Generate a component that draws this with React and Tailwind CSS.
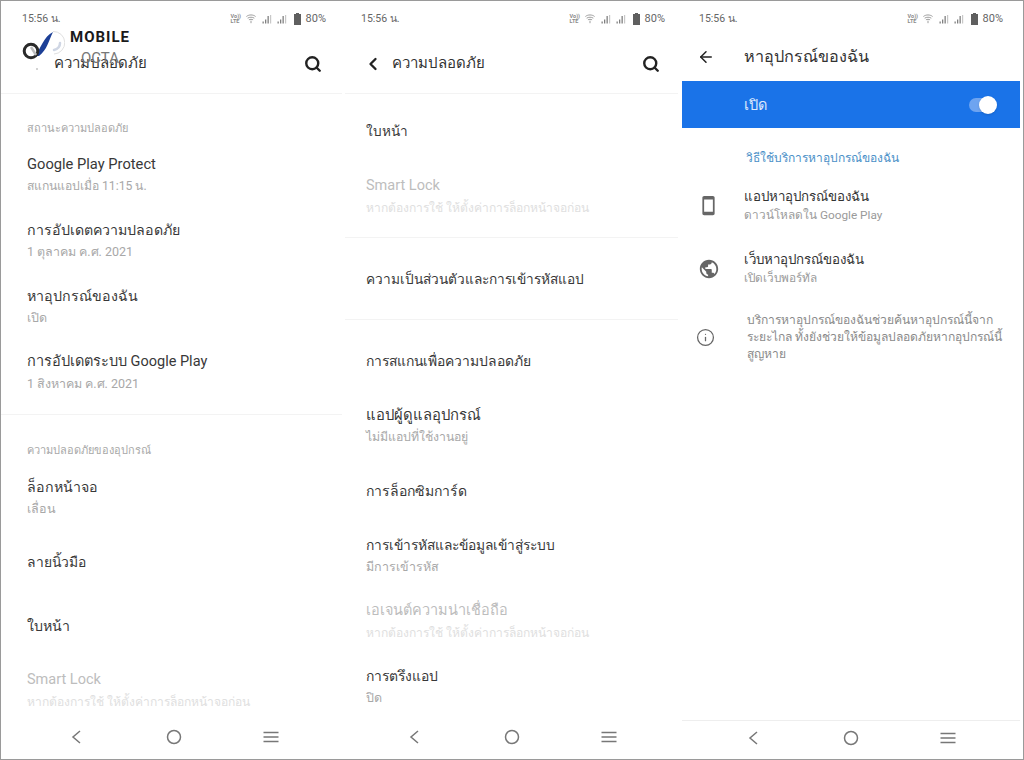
import React from "react";
import { Search, ChevronLeft, ArrowLeft, Info } from "lucide-react";

function StatusBar({ pl, pr }) {
  return (
    <div className={`h-[36px] shrink-0 flex items-center justify-between ${pl} ${pr} text-[10.5px] text-[#666666]`}>
      <span>15:56 น.</span>
      <div className="flex items-center">
        <div className="w-[12px] flex flex-col text-[5.5px] leading-[5px] font-bold text-[#8a8a8a]">
          <span>Vo))</span>
          <span>LTE</span>
        </div>
        <svg className="ml-[3px]" width="10" height="10" viewBox="0 0 12 11" fill="none" stroke="#8a8a8a" strokeWidth="1">
          <path d="M0.5 2.5C3.5 0 8.5 0 11.5 2.5" />
          <path d="M2 4.5C4.5 3 7.5 3 10 4.5" />
          <path d="M3.5 6.5C5 5.7 7 5.7 8.5 6.5" />
          <path d="M6 7.5v3" />
        </svg>
        <Signal className="ml-[6px]" />
        <Signal className="ml-[5px]" />
        <svg className="ml-[7px]" width="7" height="12" viewBox="0 0 7 12" fill="#5f5f5f">
          <path d="M2 0h3v1h2v11H0V1h2z" />
        </svg>
        <span className="text-[11px] ml-[5px] mt-[1px]">80%</span>
      </div>
    </div>
  );
}

function Signal({ className = "" }) {
  return (
    <svg className={className} width="10" height="9" viewBox="0 0 10 9" fill="#808080">
      <rect x="0.5" y="6.5" width="1.3" height="2" />
      <rect x="3" y="4.5" width="1.3" height="4" />
      <rect x="5.5" y="1" width="1.3" height="7.5" />
      <rect x="8" y="0" width="1.2" height="8.5" fill="#c8c8c8" />
    </svg>
  );
}

function NavBar({ pl, className = "" }) {
  return (
    <div className={`h-[34px] shrink-0 flex items-center ${pl} ${className}`}>
      <svg width="12" height="16" viewBox="0 0 12 16" fill="none" stroke="#777777" strokeWidth="1.5">
        <path d="M10 2L3 8l7 6" />
      </svg>
      <svg className="ml-[84px]" width="16" height="16" viewBox="0 0 16 16" fill="none" stroke="#777777" strokeWidth="1.5">
        <circle cx="8" cy="8" r="6.5" />
      </svg>
      <svg className="ml-[81px]" width="16" height="12" viewBox="0 0 16 12" fill="none" stroke="#777777" strokeWidth="1.4">
        <path d="M0.5 1.5h15M0.5 6h15M0.5 10.5h15" />
      </svg>
    </div>
  );
}

function Item({ title, sub, h = 66, disabled = false, pl = "pl-[26px]", size = "text-[14.2px]", subSize = "text-[12.5px]" }) {
  return (
    <div className={`shrink-0 flex flex-col justify-center ${pl}`} style={{ height: h }}>
      <div className={`${size} leading-[22px] ${disabled ? "text-[#bdbdbd]" : "text-[#383838]"}`}>{title}</div>
      {sub && (
        <div className={`${subSize} leading-[22px] ${disabled ? "text-[#e0e0e0]" : "text-[#a8a8a8]"}`}>{sub}</div>
      )}
    </div>
  );
}

function Label({ children, className = "" }) {
  return <div className={`pl-[26px] text-[11px] leading-[16px] text-[#a8a8a8] ${className}`}>{children}</div>;
}

function Header({ pl, pr, hideChevron = false }) {
  return (
    <div className={`h-[57px] shrink-0 flex items-center justify-between ${pl} ${pr} pb-[3px] border-b border-[#f3f3f3]`}>
      <div className="flex items-center gap-[9px]">
        <ChevronLeft className={hideChevron ? "invisible" : ""} size={20} strokeWidth={2.8} color="#222222" />
        <span className="text-[15px] text-[#333333]">ความปลอดภัย</span>
      </div>
      <Search size={18} strokeWidth={3.2} color="#222222" />
    </div>
  );
}

function Logo() {
  return (
    <div className="absolute left-[20px] top-[27px] w-[110px] h-[44px] pointer-events-none">
      <svg className="absolute left-0 top-0" width="44" height="36" viewBox="0 0 44 36" fill="none">
        <path d="M32 3.5A11 11 0 1 1 33 26" stroke="#e0e0e0" strokeWidth="1" />
        <path d="M33 22C37 21 39 18 39 15" stroke="#cfd6e4" strokeWidth="2.5" strokeLinecap="round" />
        <path d="M14 28C19 22 23 8 32 4C28 12 26 22 18 28Z" fill="#1c3f96" />
        <circle cx="10" cy="23" r="6.8" stroke="#2a2a2a" strokeWidth="3" />
        <path d="M10 19L15 27" stroke="#bdbdbd" strokeWidth="2.5" />
      </svg>
      <span className="absolute left-[49px] top-0 text-[15px] leading-[18px] font-bold tracking-[1px] text-[#1a1a1a]">MOBILE</span>
      <span className="absolute left-[60px] top-[21px] text-[15px] leading-[18px] text-[#777777]">OCTA</span>
      <div className="absolute left-[15px] top-[40px] w-[2px] h-[2px] rounded-full bg-[#c4c4c4]" />
    </div>
  );
}

function Panel1() {
  return (
    <div className="relative w-[341px] h-[757px] pb-[4px] bg-white flex flex-col overflow-hidden">
      <StatusBar pl="pl-[21px]" pr="pr-[16px]" />
      <Header pl="pl-[24px]" pr="pr-[20px]" hideChevron />
      <div className="flex-1 min-h-0 flex flex-col">
        <Label className="pt-[27px] pb-[5px]">สถานะความปลอดภัย</Label>
        <Item title="Google Play Protect" sub="สแกนแอปเมื่อ 11:15 น." size="text-[14.7px]" subSize="text-[12.2px]" />
        <Item title="การอัปเดตความปลอดภัย" sub="1 ตุลาคม ค.ศ. 2021" />
        <Item title="หาอุปกรณ์ของฉัน" sub="เปิด" />
        <Item title="การอัปเดตระบบ Google Play" sub="1 สิงหาคม ค.ศ. 2021" size="text-[14.5px]" />
        <div className="mt-[8px] border-t border-[#f3f3f3]" />
        <Label className="pt-[28px] pb-[6px]">ความปลอดภัยของอุปกรณ์</Label>
        <Item title="ล็อกหน้าจอ" sub="เลื่อน" h={65} />
        <Item title="ลายนิ้วมือ" h={64} size="text-[13.9px]" />
        <Item title="ใบหน้า" h={64} />
        <Item title="Smart Lock" sub="หากต้องการใช้ ให้ตั้งค่าการล็อกหน้าจอก่อน" disabled size="text-[14.5px]" subSize="text-[12.1px]" />
      </div>
      <NavBar pl="pl-[69px]" />
      <Logo />
    </div>
  );
}

function Panel2() {
  const pl = "pl-[21px]";
  return (
    <div className="w-[333px] h-[757px] pb-[4px] bg-white flex flex-col overflow-hidden">
      <StatusBar pl="pl-[16px]" pr="pr-[13px]" />
      <Header pl="pl-[18px]" pr="pr-[18px]" />
      <div className="flex-1 min-h-0 flex flex-col">
        <div className="h-[10px] shrink-0" />
        <Item pl={pl} title="ใบหน้า" h={53} size="text-[13.6px]" />
        <div className="h-[12px] shrink-0" />
        <Item pl={pl} title="Smart Lock" sub="หากต้องการใช้ ให้ตั้งค่าการล็อกหน้าจอก่อน" h={56} disabled size="text-[14.5px]" subSize="text-[12.1px]" />
        <div className="mt-[12px] border-t border-[#f3f3f3]" />
        <Item pl={pl} title="ความเป็นส่วนตัวและการเข้ารหัสแอป" h={81} size="text-[13.7px]" />
        <div className="border-t border-[#f3f3f3]" />
        <div className="h-[8px] shrink-0" />
        <Item pl={pl} title="การสแกนเพื่อความปลอดภัย" h={66} size="text-[13.9px]" />
        <Item pl={pl} title="แอปผู้ดูแลอุปกรณ์" sub="ไม่มีแอปที่ใช้งานอยู่" h={64} size="text-[14.8px]" subSize="text-[12.3px]" />
        <Item pl={pl} title="การล็อกซิมการ์ด" h={65} size="text-[14px]" />
        <Item pl={pl} title="การเข้ารหัสและข้อมูลเข้าสู่ระบบ" sub="มีการเข้ารหัส" h={66} size="text-[13.8px]" />
        <Item pl={pl} title="เอเจนต์ความน่าเชื่อถือ" sub="หากต้องการใช้ ให้ตั้งค่าการล็อกหน้าจอก่อน" h={66} disabled size="text-[14.5px]" subSize="text-[12.1px]" />
        <Item pl={pl} title="การตรึงแอป" sub="ปิด" h={64} size="text-[13.9px]" />
      </div>
      <NavBar pl="pl-[63px]" />
    </div>
  );
}

function FindRow({ icon, title, sub }) {
  return (
    <div className="h-[63px] flex items-center">
      <div className="w-[62px] pl-[16px] flex justify-start">{icon}</div>
      <div>
        <div className="text-[13.3px] leading-[18px] text-[#333333]">{title}</div>
        <div className="text-[11.8px] leading-[18px] text-[#9a9a9a]">{sub}</div>
      </div>
    </div>
  );
}

function PhoneIcon() {
  return (
    <svg width="21" height="21" viewBox="0 0 24 24" fill="#666666">
      <path d="M17 1.01L7 1c-1.1 0-2 .9-2 2v18c0 1.1.9 2 2 2h10c1.1 0 2-.9 2-2V3c0-1.1-.9-1.99-2-1.99zM17 19H7V5h10v14z" />
    </svg>
  );
}

function PublicIcon() {
  return (
    <svg width="22" height="22" viewBox="0 0 24 24" fill="#666666">
      <path d="M12 2C6.48 2 2 6.48 2 12s4.48 10 10 10 10-4.48 10-10S17.52 2 12 2zm-1 17.93c-3.95-.49-7-3.85-7-7.93 0-.62.08-1.21.21-1.79L9 15v1c0 1.1.9 2 2 2v1.93zm6.9-2.54c-.26-.81-1-1.39-1.9-1.39h-1v-3c0-.55-.45-1-1-1H8v-2h2c.55 0 1-.45 1-1V7h2c1.1 0 2-.9 2-2v-.41c2.93 1.19 5 4.06 5 7.41 0 2.08-.8 3.97-2.1 5.39z" />
    </svg>
  );
}

function Panel3() {
  return (
    <div className="ml-[1px] w-[338px] h-[757px] pb-[4px] bg-white flex flex-col overflow-hidden">
      <StatusBar pl="pl-[17px]" pr="pr-[17px]" />
      <div className="h-[44px] shrink-0 flex items-center pl-[15px] pb-[4px]">
        <ArrowLeft size={18} strokeWidth={2} color="#222222" />
        <span className="ml-[29px] text-[16.2px] text-[#333333]">หาอุปกรณ์ของฉัน</span>
      </div>
      <div className="h-[47px] shrink-0 bg-[#1a73e8] flex items-center justify-between pl-[62px] pr-[24px]">
        <span className="text-[14.5px] text-white/85 pt-[2px]">เปิด</span>
        <div className="relative w-[27px] h-[14px] rounded-full bg-[#6ea4f0]">
          <div className="absolute right-[-1px] top-[-2px] w-[18px] h-[18px] rounded-full bg-white shadow" />
        </div>
      </div>
      <div className="pl-[64px] pt-[21px] text-[12px] leading-[18px] text-[#4a8fc7]">วิธีใช้บริการหาอุปกรณ์ของฉัน</div>
      <div className="mt-[7px]">
        <FindRow icon={<PhoneIcon />} title="แอปหาอุปกรณ์ของฉัน" sub="ดาวน์โหลดใน Google Play" />
        <FindRow icon={<PublicIcon />} title="เว็บหาอุปกรณ์ของฉัน" sub="เปิดเว็บพอร์ทัล" />
      </div>
      <div className="flex items-center mt-[12px]">
        <div className="w-[65px] pl-[14px]"><Info size={19} strokeWidth={1.6} color="#666666" /></div>
        <div className="w-[266px] text-[12.1px] leading-[17px] text-[#8a8a8a]">บริการหาอุปกรณ์ของฉันช่วยค้นหาอุปกรณ์นี้จากระยะไกล ทั้งยังช่วยให้ข้อมูลปลอดภัยหากอุปกรณ์นี้สูญหาย</div>
      </div>
      <div className="flex-1" />
      <NavBar pl="pl-[65px]" className="border-t border-[#eeeeee]" />
    </div>
  );
}

export default function App() {
  return (
    <div className="w-[1024px] h-[760px] bg-white border border-[#9a9a9a] flex gap-[3px] overflow-hidden font-['Roboto','Noto_Sans','DejaVu_Sans',sans-serif]">
      <Panel1 />
      <Panel2 />
      <Panel3 />
    </div>
  );
}
